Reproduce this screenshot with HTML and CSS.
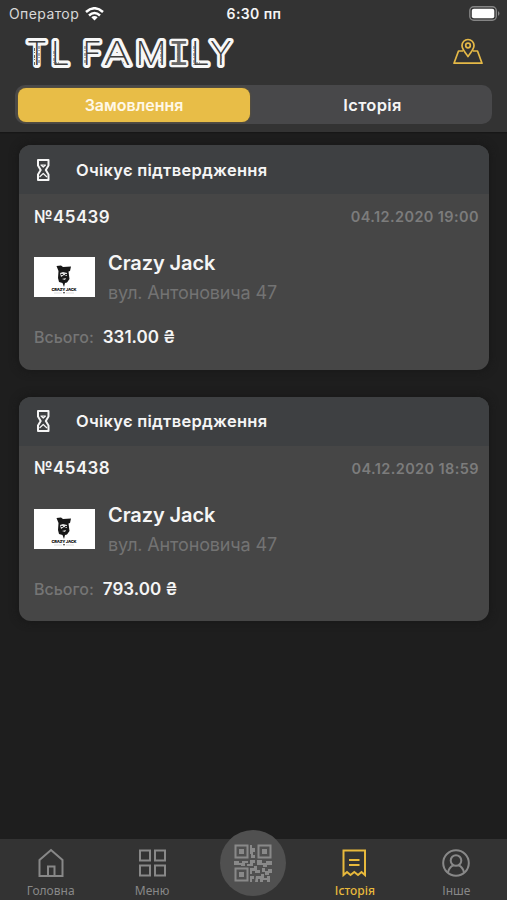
FILE: index.html
```html
<!DOCTYPE html>
<html lang="uk">
<head>
<meta charset="utf-8">
<title>TL Family</title>
<link rel="stylesheet" href="styles.css">
</head>
<body>
<svg class="defs" width="0" height="0">
  <symbol id="hourglass" viewBox="0 0 16 24"><path d="M3 2H13.500V7.500L10.800 12L13.500 16.500V22H3V16.500L5.700 12L3 7.500Z" stroke-width="2"/><path d="M6 7H10.500L8.250 9ZM4.500 19L8.250 15.500L12 19" stroke-width="1.200"/></symbol>
  <symbol id="jack" viewBox="0 0 61 40"><path d="M22.500 9L27 8.500L29 10L37 9.500L36 14L34.500 14.500L35.500 22L33 25.500L31 26L30 30L28.500 26L25 25L24 21L24.500 14Z" fill="#171717"/><path d="M26 16L29 15L33 16V19L30 18L27 20ZM28 22L32 21L31 23Z" fill="#ddd"/><path d="M27 17.500H29M31 17.500H33" stroke="#222" stroke-width="1"/><text x="17.500" y="34.300" textLength="25">CRAZY JACK</text><path d="M20 36H28M32 36H40" stroke="#bbb" stroke-width=".5"/><path d="M29 35L31 35L30 37Z" fill="#333"/></symbol>
</svg>
<div class="screen">
  <header class="header">
    <div class="status">
      <div class="carrier"><span>Оператор</span>
        <svg width="19" height="14" viewBox="0 0 19 14" fill="none" stroke="#fff" stroke-width="2.500"><path d="M1 5Q9.500-2.500 18 5M4 8.500Q9.500 3.500 15 8.500"/><path d="M6.300 10.300Q9.500 7.700 12.700 10.300L9.500 13.500Z" fill="#fff" stroke="none"/></svg>
      </div>
      <div class="time">6:30 пп</div>
      <svg class="battery" width="32" height="15" viewBox="0 0 32 15"><rect x=".8" y=".8" width="26.500" height="13.400" rx="4" fill="#333" stroke="#858585" stroke-width="1.400"/><rect x="2.800" y="2.800" width="22.500" height="9.400" rx="2" fill="#fff"/><path d="M29 5Q32 7.500 29 10Z" fill="#858585"/></svg>
    </div>
    <div class="brand">
      <svg class="logo" width="216" height="38" viewBox="0 0 216 38"><text y="30.500"><tspan x="3.500">T</tspan><tspan x="28">L</tspan><tspan x="59.500">F</tspan><tspan x="80.500" textLength="27" lengthAdjust="spacingAndGlyphs">A</tspan><tspan x="112.500" textLength="31" lengthAdjust="spacingAndGlyphs">M</tspan><tspan class="slab" x="145">I</tspan><tspan x="168">L</tspan><tspan x="187">Y</tspan></text><path class="wear" d="M11.500 14V31M16 12V29M31 17V31M62 12V29M83 30L91 13M117 13V29M155 12V31M171 12V31M198 22V31M31 29H36M172 29H177M138 13V29M97 26L102 30M149 29H160"/></svg>
      <svg class="pin" width="32" height="28" viewBox="0 0 32 28" fill="none" stroke="#e5b947" stroke-width="1.700" stroke-linejoin="round"><path d="M11 13H6.500L2 25.200H30L25.500 13H21M16 18.500C13.500 14.500 10 11.500 10 7.500A6 6 0 0 1 22 7.500C22 11.500 18.500 14.500 16 18.500Z"/><circle cx="16" cy="7.500" r="2.300"/></svg>
    </div>
    <div class="segments"><div class="segment active">Замовлення</div><div class="segment">Історія</div></div>
  </header>
  <main class="orders">
    <article class="card">
      <div class="state"><svg class="wait" width="16" height="24"><use href="#hourglass"/></svg><span>Очікує підтвердження</span></div>
      <div class="details">
        <div class="meta"><span class="number">№45439</span><span class="date">04.12.2020 19:00</span></div>
        <div class="place"><svg class="photo" width="61" height="40"><use href="#jack"/></svg><div><div class="name">Crazy Jack</div><div class="address">вул. Антоновича 47</div></div></div>
        <div class="total"><span class="label">Всього:</span><span class="sum">331.00 ₴</span></div>
      </div>
    </article>
    <article class="card">
      <div class="state"><svg class="wait" width="16" height="24"><use href="#hourglass"/></svg><span>Очікує підтвердження</span></div>
      <div class="details">
        <div class="meta"><span class="number">№45438</span><span class="date">04.12.2020 18:59</span></div>
        <div class="place"><svg class="photo" width="61" height="40"><use href="#jack"/></svg><div><div class="name">Crazy Jack</div><div class="address">вул. Антоновича 47</div></div></div>
        <div class="total"><span class="label">Всього:</span><span class="sum">793.00 ₴</span></div>
      </div>
    </article>
  </main>
  <nav class="tabs">
    <div class="tab"><svg width="30" height="30" viewBox="0 0 30 30"><path d="M3.500 28V12L15 2L26.500 12V28ZM12 28V18.500H18.500V28"/></svg><span>Головна</span></div>
    <div class="tab"><svg width="30" height="30" viewBox="0 0 30 30"><path d="M3 2.500H13V12.500H3ZM18 2.500H28V12.500H18ZM3 17.500H13V27.500H3ZM18 17.500H28V27.500H18Z"/></svg><span>Меню</span></div>
    <div class="tab"><div class="scan"><svg width="38" height="38" viewBox="0 0 38 38"><g fill="none" stroke="#898989" stroke-width="2"><path d="M1.500 1.500H13.500V13.500H1.500ZM24.500 1.500H36.500V13.500H24.500ZM1.500 24.500H13.500V36.500H1.500Z"/></g><path fill="#898989" d="M5 5h5v5H5zM28 5h5v5h-5zM5 28h5v5H5zM16 1h2v3h3v4h-2v3h2v3h-4v-4h-1zM0 17h5v2h3v-2h6v2h-3v3H7v-1H0zM16 16h5v3h-2v3h-6v-2h3zM23 16h5v3h4v-2h6v4h-5v2h-4v-2h-6zM16 24h4v-2h3v4h3v3h-5v-2h-3v3h-2zM28 24h3v3h3v-2h4v4h-3v2h-4v-3h-3zM16 32h4v3h-2v3h-2zM22 32h5v-2h3v4h3v-2h3v6h-3v-2h-4v2h-3v-3h-2v3h-3z"/></svg></div></div>
    <div class="tab selected"><svg width="30" height="30" viewBox="0 0 30 30"><path d="M3.500 27V2.500H25V27L21.500 24L18 27L14.300 24L10.500 27L7 24ZM9 12H19.500M9 17H19.500"/></svg><span>Історія</span></div>
    <div class="tab"><svg width="30" height="30" viewBox="0 0 30 30"><circle cx="15" cy="15" r="12.800"/><circle cx="15" cy="12.500" r="5.300"/><path d="M7 25C7.500 20.500 10 18.500 12.500 17.200M23 25C22.500 20.500 20 18.500 17.500 17.200"/></svg><span>Інше</span></div>
  </nav>
</div>
</body>
</html>
```
FILE: styles.css
```css
* { box-sizing: border-box; }
body { margin: 0; background: #1e1e1e; color: #f5f5f5; font-family: Inter, sans-serif; }
svg { display: block; flex: none; }
.defs { display: none; }
.screen { height: 900px; display: flex; flex-direction: column; }
.header { height: 132px; flex: none; background: #333; padding: 0 15px; box-shadow: 0 1px 1px #171717; }
.status { height: 28px; margin: 0 -9px 0 -6px; display: grid; grid-template-columns: 1fr auto 1fr; align-items: center; }
.carrier { display: flex; align-items: center; gap: 6px; font-size: 14px; line-height: 20px; color: #d8d8d8; letter-spacing: .4px; }
.time { font-size: 14px; font-weight: 600; letter-spacing: .4px; margin-left: -2px; margin-top: -1px; }
.battery { justify-self: end; margin-top: -2px; }
.brand { height: 57px; display: flex; justify-content: space-between; padding: 6px 8px 0 8px; }
.logo { overflow: visible; }
.logo text { font-family: Inter, sans-serif; font-weight: 200; font-size: 33px; fill: #3c3c3c; stroke: #f7f7f7; stroke-width: 6px; stroke-linejoin: round; paint-order: stroke; }
.logo .slab { font-family: "Liberation Mono", monospace; font-size: 36px; stroke-width: 4.5px; fill: #666; }
.wear { fill: none; stroke: #666; stroke-width: 1; stroke-dasharray: 3 1 1 2; }
.pin { margin-top: 4px; }
.segments { width: 477px; height: 39px; border-radius: 10px; background: #48484a; display: flex; padding: 3px; }
.segment { flex: 1; border-radius: 8px; text-align: center; font-size: 16.5px; line-height: 34px; height: 34px; font-weight: 600; letter-spacing: .35px; padding-left: 6px; }
.segment.active { flex: none; width: 232px; background: #e8bd47; color: #fff8e7; box-shadow: 0 0 2px #765e25; font-size: 16px; letter-spacing: 0; padding-left: 0; }
.orders { flex: 1; padding: 13px 18px 0 19px; display: flex; flex-direction: column; gap: 27px; }
.card { height: 224.500px; border-radius: 12px; background: #464646; overflow: hidden; box-shadow: 0 0 10px #161616; }
.state { height: 49px; background: #3e4042; display: flex; align-items: center; gap: 25px; padding-left: 16px; font-size: 16.5px; font-weight: 600; letter-spacing: .26px; }
.wait { fill: none; stroke: #f5f5f5; stroke-linejoin: round; }
.details { padding: 12px 10px 0 15px; }
.meta { display: flex; justify-content: space-between; align-items: center; height: 21px; }
.number { font-size: 17px; font-weight: 600; letter-spacing: .4px; }
.date { font-size: 14.5px; font-weight: 600; letter-spacing: .4px; color: #7c7c7c; }
.place { display: flex; gap: 13px; margin-top: 23px; height: 60px; }
.photo { background: #fff; margin-top: 7px; }
#jack text { font: 900 4px Inter, sans-serif; fill: #222; stroke: none; }
.name { font-size: 20px; line-height: 27px; font-weight: 600; letter-spacing: -.1px; }
.address { font-size: 18px; line-height: 31px; color: #737373; letter-spacing: -.15px; }
.total { display: flex; align-items: center; gap: 9px; height: 26px; margin-top: 14px; }
.label { font-size: 16px; font-weight: 500; color: #757575; }
.sum { font-size: 17px; font-weight: 600; }
.tabs { height: 61px; flex: none; background: #333; display: grid; grid-template-columns: repeat(5, 1fr); }
.tab { display: flex; flex-direction: column; align-items: center; padding-top: 9px; color: #888; font: 12px/18px "Noto Sans", sans-serif; }
.tab > svg { fill: none; stroke: currentColor; stroke-width: 2; }
.tab > span { margin-top: 4px; }
.selected { color: #e8b93c; font-weight: 500; }
.scan { width: 66px; height: 66px; flex: none; margin-top: -18px; border-radius: 50%; background: #505050; display: grid; place-items: center; }
```
